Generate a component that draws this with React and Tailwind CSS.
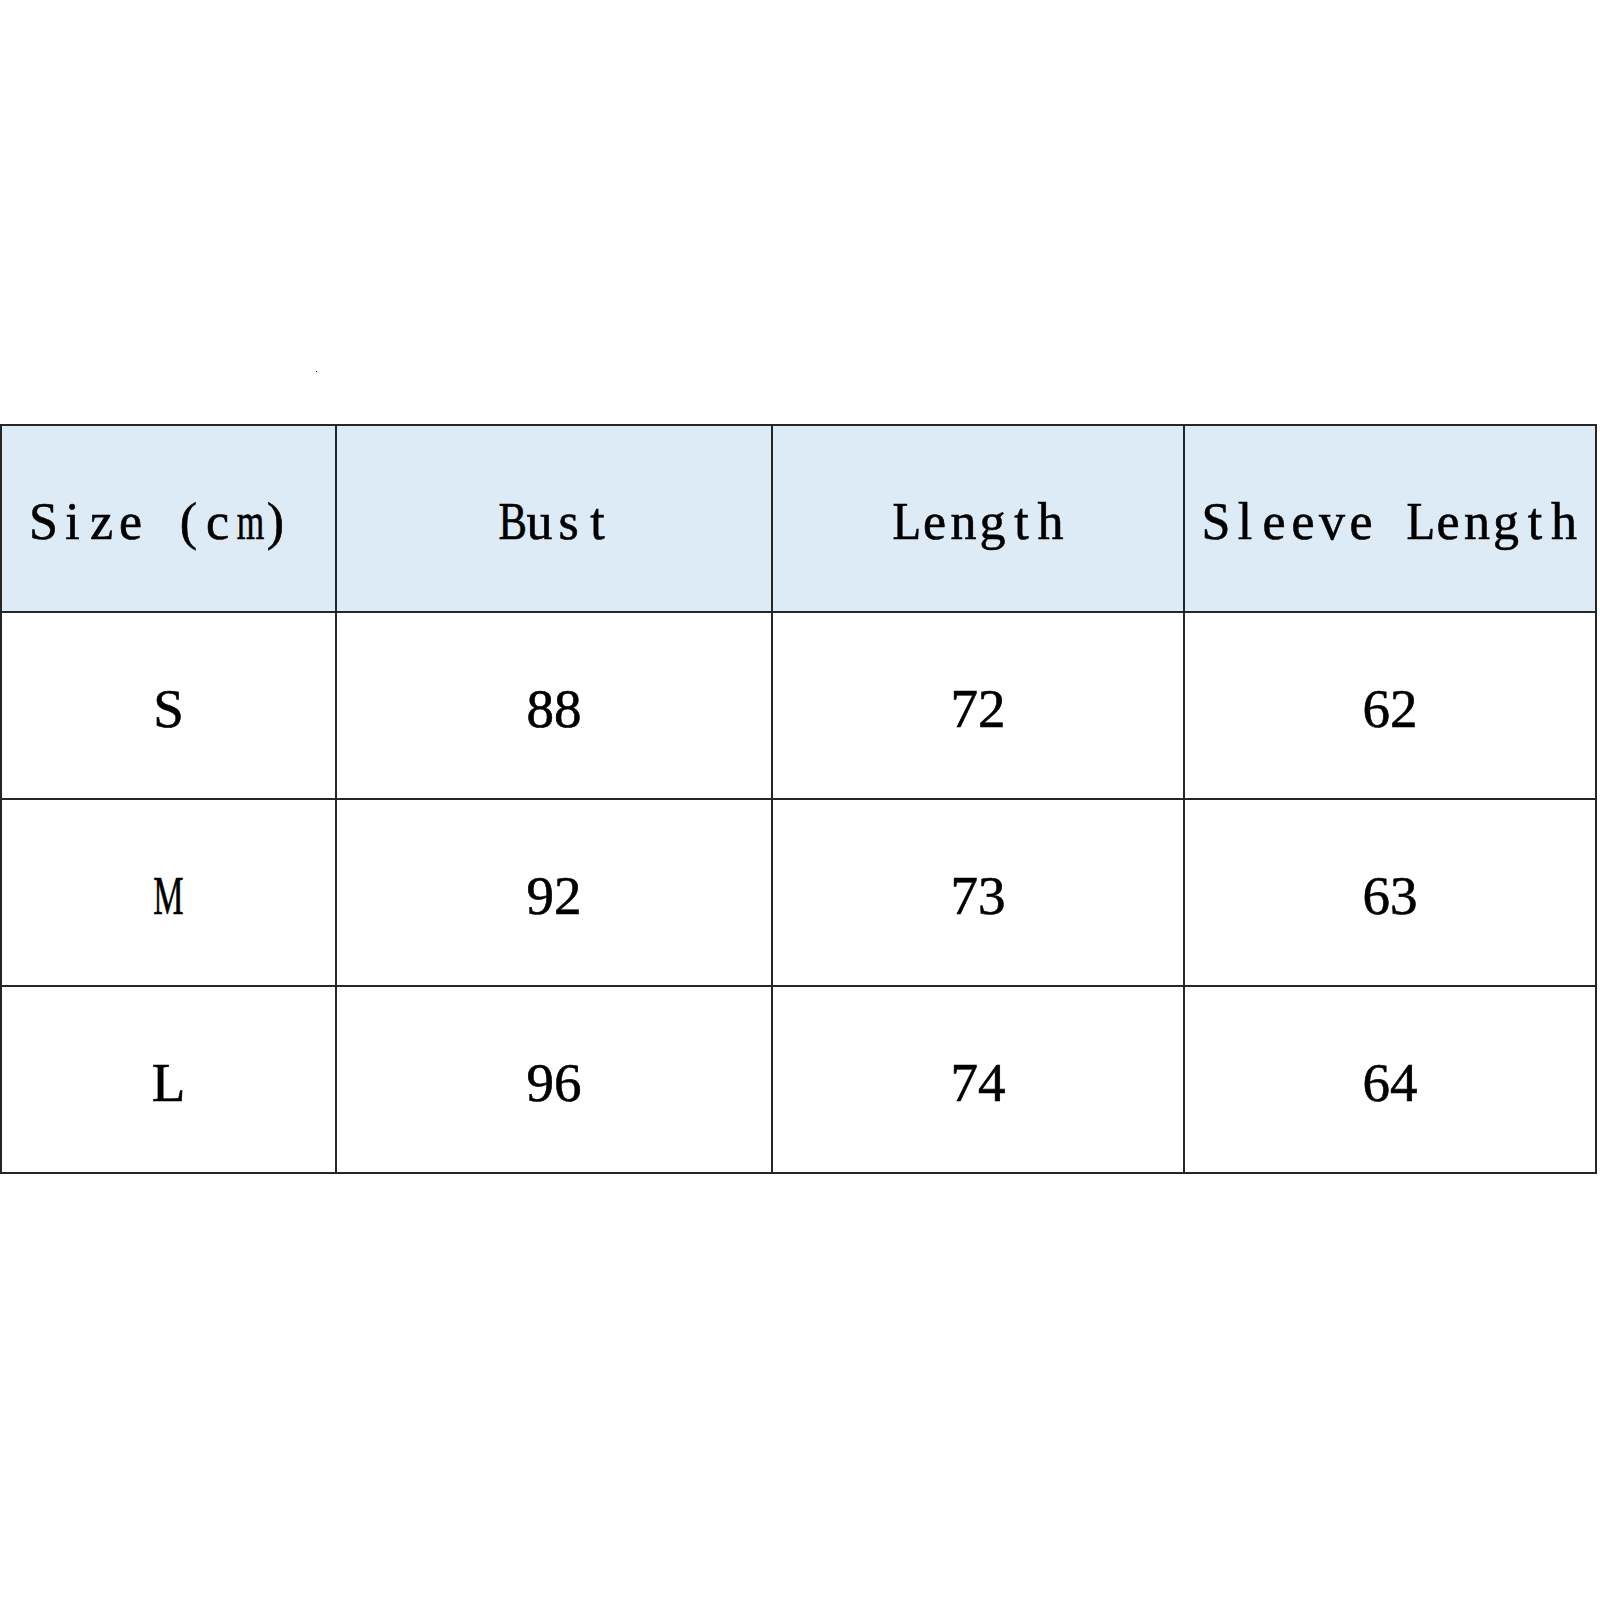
import React from 'react';

const headers = ['Size (cm)', 'Bust', 'Length', 'Sleeve Length'];

const rows = [
  ['S', '88', '72', '62'],
  ['M', '92', '73', '63'],
  ['L', '96', '74', '64'],
];

// wide latin glyphs get squeezed so they fit the half-width cell like the original font
const squeeze = {
  m: 'scale-x-[0.68]',
  B: 'scale-x-[0.82]',
  L: 'scale-x-[0.9]',
};

const SpacedText = ({ text }) => (
  <span className="flex">
    {text.split('').map((ch, i) => (
      <span key={i} className={`inline-block w-[29px] text-center ${squeeze[ch] || ''}`}>
        {ch === ' ' ? '\u00a0' : ch}
      </span>
    ))}
  </span>
);

const App = () => {
  return (
    <div
      className="relative w-[1600px] h-[1600px] bg-white text-black"
      style={{ fontFamily: '"Liberation Serif", "Times New Roman", serif' }}
    >
      <div className="absolute left-[316px] top-[371px] w-[1px] h-[1px] bg-black"></div>

      <div className="pt-[424px]">
        <div className="grid w-[1597px] grid-cols-[333px_434px_410px_410px] auto-rows-[185px] gap-[2px] bg-[#262626] p-[2px]">
          {headers.map((h, i) => (
            <div
              key={h}
              className={`flex items-center bg-[#ddebf7] text-[52px] leading-none pt-[6px] [-webkit-text-stroke:0.6px_black] ${
                i === 0 ? 'justify-start pl-[27px]' : 'justify-center'
              }`}
            >
              <SpacedText text={h} />
            </div>
          ))}

          {rows.map((row) =>
            row.map((cell, j) => (
              <div
                key={row[0] + j}
                className="flex items-center justify-center bg-white text-[55px] leading-none pt-[6px] [-webkit-text-stroke:0.6px_black]"
              >
                <span className={`inline-block ${j === 0 && cell === 'M' ? 'scale-x-[0.62]' : ''}`}>{cell}</span>
              </div>
            ))
          )}
        </div>
      </div>
    </div>
  );
};

export default App;
